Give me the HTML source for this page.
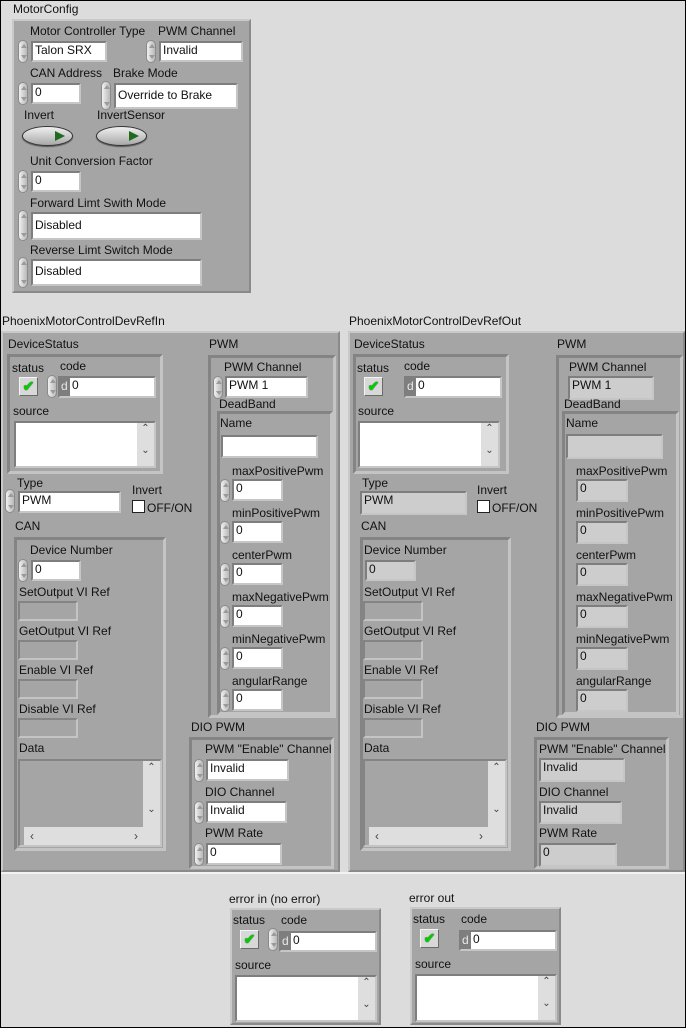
<!DOCTYPE html>
<html><head><meta charset="utf-8"><style>
*{margin:0;padding:0;box-sizing:border-box}
body{width:686px;height:1028px;background:#dcdcdc;position:relative;overflow:hidden;font:12px "Liberation Sans",sans-serif;color:#111}
#frame{position:absolute;left:0;top:0;width:686px;height:1028px;border:1px solid #000;pointer-events:none;z-index:9}
.a{position:absolute}
.L{position:absolute;white-space:nowrap;font-size:12px;line-height:14px}
.C{position:absolute;background:#a5a5a5;border:2px solid;border-color:#c9c9c9 #8a8a8a #8a8a8a #c9c9c9}
.R{position:absolute;background:#a5a5a5;border:3px solid;border-color:#848484 #c4c4c4 #c4c4c4 #848484}
.B{position:absolute;background:#fff;border:2px solid;border-color:#7e7e7e #c6c6c6 #c6c6c6 #7e7e7e;padding-left:2px;line-height:15px;font-size:12px;white-space:nowrap;overflow:hidden}
.I{position:absolute;background:#cdcdcd;border:2px solid;border-color:#7e7e7e #c6c6c6 #c6c6c6 #7e7e7e;padding-left:2px;line-height:15px;font-size:12px;white-space:nowrap;overflow:hidden}
.S{position:absolute;width:10px;border-radius:5px;background:linear-gradient(90deg,#f0f0f0,#b8b8b8);border:1px solid #8a8a8a}
.S:before{content:"";position:absolute;left:2px;top:3px;border-left:3px solid transparent;border-right:3px solid transparent;border-bottom:4px solid #9a9a9a}
.S:after{content:"";position:absolute;left:2px;bottom:3px;border-left:3px solid transparent;border-right:3px solid transparent;border-top:4px solid #9a9a9a}
.T{position:absolute;width:51px;height:20px;border-radius:50%;background:linear-gradient(#f0f0f0,#a8a8a8);border:1px solid #333;box-shadow:0 1px 1px #555}
.T:after{content:"";position:absolute;right:7px;top:4px;border-top:5px solid transparent;border-bottom:5px solid transparent;border-left:10px solid #1f6a1f}
.K{position:absolute;width:19px;height:19px;background:#d8d8d8;border:1px solid;border-color:#f4f4f4 #6a6a6a #6a6a6a #f4f4f4;color:#00d000;font-size:14px;line-height:16px;text-align:center;font-weight:bold;text-shadow:0 0 1px #000}
.D{position:absolute;width:10px;background:#7e7e7e;color:#e8e8e8;font-size:12px;line-height:16px;padding-left:1px}
.SB{position:absolute;background:#dedede;color:#444;font-size:10px;text-align:center}
.CB{position:absolute;width:13px;height:13px;background:#fff;border:1px solid #222}
</style></head><body>
<div id="frame"></div>
<div class="a" style="left:0;top:872px;width:686px;height:2px;background:#f2f2f2"></div>

<!-- MotorConfig -->
<div class="L" style="left:13px;top:2px">MotorConfig</div>
<div class="C" style="left:12px;top:19px;width:239px;height:274px"></div>
<div class="L" style="left:30px;top:24px">Motor Controller Type</div>
<div class="S" style="left:18px;top:40px;height:23px"></div>
<div class="B" style="left:31px;top:41px;width:76px;height:21px">Talon SRX</div>
<div class="L" style="left:158px;top:24px">PWM Channel</div>
<div class="S" style="left:146px;top:40px;height:23px"></div>
<div class="B" style="left:159px;top:41px;width:84px;height:21px">Invalid</div>
<div class="L" style="left:30px;top:66px">CAN Address</div>
<div class="S" style="left:18px;top:82px;height:23px"></div>
<div class="B" style="left:31px;top:83px;width:50px;height:21px">0</div>
<div class="L" style="left:113px;top:66px">Brake Mode</div>
<div class="S" style="left:101px;top:81px;height:29px"></div>
<div class="B" style="left:114px;top:83px;width:124px;height:26px;line-height:20px">Override to Brake</div>
<div class="L" style="left:24px;top:108px">Invert</div>
<div class="T" style="left:22px;top:126px"></div>
<div class="L" style="left:97px;top:108px">InvertSensor</div>
<div class="T" style="left:96px;top:126px"></div>
<div class="L" style="left:30px;top:154px">Unit Conversion Factor</div>
<div class="S" style="left:18px;top:170px;height:23px"></div>
<div class="B" style="left:31px;top:171px;width:50px;height:21px">0</div>
<div class="L" style="left:30px;top:196px">Forward Limt Swith Mode</div>
<div class="S" style="left:18px;top:210px;height:31px"></div>
<div class="B" style="left:31px;top:212px;width:171px;height:28px;line-height:22px">Disabled</div>
<div class="L" style="left:30px;top:243px">Reverse Limt Switch Mode</div>
<div class="S" style="left:18px;top:257px;height:31px"></div>
<div class="B" style="left:31px;top:259px;width:171px;height:27px;line-height:21px">Disabled</div>

<!-- Left big cluster -->
<div class="L" style="left:2px;top:314px">PhoenixMotorControlDevRefIn</div>
<div class="C" style="left:1px;top:331px;width:339px;height:541px"></div>
<div class="L" style="left:8px;top:337px">DeviceStatus</div>
<div class="R" style="left:7px;top:354px;width:156px;height:120px"></div>
<div class="L" style="left:12px;top:361px">status</div>
<div class="L" style="left:60px;top:359px">code</div>
<div class="K" style="left:19px;top:377px">✔</div>
<div class="S" style="left:47px;top:375px;height:23px"></div>
<div class="B" style="left:58px;top:376px;width:98px;height:22px;padding-left:12px">0</div>
<div class="D" style="left:60px;top:378px;height:18px">d</div>
<div class="L" style="left:13px;top:404px">source</div>
<div class="B" style="left:14px;top:421px;width:142px;height:47px"></div>
<div class="SB" style="left:137px;top:423px;width:17px;height:43px">⌃<br><br>⌄</div>
<div class="L" style="left:17px;top:476px">Type</div>
<div class="S" style="left:5px;top:489px;height:24px"></div>
<div class="B" style="left:18px;top:491px;width:103px;height:22px">PWM</div>
<div class="L" style="left:132px;top:483px">Invert</div>
<div class="CB" style="left:132px;top:500px"></div>
<div class="L" style="left:147px;top:501px">OFF/ON</div>
<div class="L" style="left:15px;top:519px">CAN</div>
<div class="R" style="left:14px;top:537px;width:152px;height:314px"></div>
<div class="L" style="left:30px;top:543px">Device Number</div>
<div class="S" style="left:18px;top:559px;height:23px"></div>
<div class="B" style="left:31px;top:560px;width:50px;height:21px">0</div>
<div class="L" style="left:19px;top:585px">SetOutput VI Ref</div>
<div class="R" style="left:18px;top:601px;width:60px;height:20px;border-width:2px"></div>
<div class="L" style="left:19px;top:624px">GetOutput VI Ref</div>
<div class="R" style="left:18px;top:640px;width:60px;height:20px;border-width:2px"></div>
<div class="L" style="left:19px;top:663px">Enable VI Ref</div>
<div class="R" style="left:18px;top:679px;width:60px;height:20px;border-width:2px"></div>
<div class="L" style="left:19px;top:702px">Disable VI Ref</div>
<div class="R" style="left:18px;top:718px;width:60px;height:20px;border-width:2px"></div>
<div class="L" style="left:19px;top:741px">Data</div>
<div class="R" style="left:18px;top:759px;width:144px;height:88px;border-width:2px"></div>
<div class="SB" style="left:143px;top:761px;width:17px;height:66px;line-height:14px">⌃<br><br><br>⌄</div>
<div class="SB" style="left:24px;top:827px;width:136px;height:18px;line-height:18px;font-size:12px;text-align:left;padding-left:6px">‹<span style="margin-left:100px">›</span></div>

<div class="L" style="left:209px;top:337px">PWM</div>
<div class="R" style="left:208px;top:355px;width:128px;height:363px"></div>
<div class="L" style="left:224px;top:360px">PWM Channel</div>
<div class="S" style="left:213px;top:376px;height:23px"></div>
<div class="B" style="left:225px;top:376px;width:83px;height:22px">PWM 1</div>
<div class="L" style="left:219px;top:397px">DeadBand</div>
<div class="R" style="left:217px;top:411px;width:116px;height:304px"></div>
<div class="L" style="left:220px;top:416px">Name</div>
<div class="B" style="left:221px;top:435px;width:97px;height:23px"></div>
<div class="L" style="left:232px;top:464px">maxPositivePwm</div>
<div class="S" style="left:220px;top:479px;height:23px"></div>
<div class="B" style="left:232px;top:479px;width:51px;height:22px">0</div>
<div class="L" style="left:232px;top:506px">minPositivePwm</div>
<div class="S" style="left:220px;top:521px;height:23px"></div>
<div class="B" style="left:232px;top:521px;width:51px;height:22px">0</div>
<div class="L" style="left:232px;top:548px">centerPwm</div>
<div class="S" style="left:220px;top:563px;height:23px"></div>
<div class="B" style="left:232px;top:563px;width:51px;height:22px">0</div>
<div class="L" style="left:232px;top:590px">maxNegativePwm</div>
<div class="S" style="left:220px;top:605px;height:23px"></div>
<div class="B" style="left:232px;top:605px;width:51px;height:22px">0</div>
<div class="L" style="left:232px;top:632px">minNegativePwm</div>
<div class="S" style="left:220px;top:647px;height:23px"></div>
<div class="B" style="left:232px;top:647px;width:51px;height:22px">0</div>
<div class="L" style="left:232px;top:674px">angularRange</div>
<div class="S" style="left:220px;top:689px;height:23px"></div>
<div class="B" style="left:232px;top:689px;width:51px;height:22px">0</div>

<div class="L" style="left:191px;top:720px">DIO PWM</div>
<div class="R" style="left:189px;top:737px;width:145px;height:132px"></div>
<div class="L" style="left:205px;top:742px">PWM "Enable" Channel</div>
<div class="S" style="left:194px;top:759px;height:23px"></div>
<div class="B" style="left:206px;top:759px;width:83px;height:22px">Invalid</div>
<div class="L" style="left:205px;top:785px">DIO Channel</div>
<div class="S" style="left:194px;top:801px;height:23px"></div>
<div class="B" style="left:206px;top:801px;width:81px;height:22px">Invalid</div>
<div class="L" style="left:205px;top:826px">PWM Rate</div>
<div class="S" style="left:194px;top:843px;height:23px"></div>
<div class="B" style="left:206px;top:843px;width:76px;height:22px">0</div>

<!-- Right big cluster -->
<div class="L" style="left:349px;top:314px">PhoenixMotorControlDevRefOut</div>
<div class="C" style="left:348px;top:331px;width:337px;height:541px"></div>
<div class="L" style="left:354px;top:337px">DeviceStatus</div>
<div class="R" style="left:353px;top:354px;width:156px;height:120px"></div>
<div class="L" style="left:357px;top:361px">status</div>
<div class="L" style="left:404px;top:359px">code</div>
<div class="K" style="left:364px;top:377px">✔</div>
<div class="B" style="left:404px;top:376px;width:98px;height:22px;padding-left:12px">0</div>
<div class="D" style="left:406px;top:378px;height:18px">d</div>
<div class="L" style="left:358px;top:404px">source</div>
<div class="B" style="left:358px;top:421px;width:142px;height:47px"></div>
<div class="SB" style="left:481px;top:423px;width:17px;height:43px">⌃<br><br>⌄</div>
<div class="L" style="left:362px;top:476px">Type</div>
<div class="I" style="left:360px;top:491px;width:107px;height:24px">PWM</div>
<div class="L" style="left:477px;top:483px">Invert</div>
<div class="CB" style="left:477px;top:500px"></div>
<div class="L" style="left:492px;top:501px">OFF/ON</div>
<div class="L" style="left:361px;top:519px">CAN</div>
<div class="R" style="left:360px;top:537px;width:151px;height:314px"></div>
<div class="L" style="left:364px;top:543px">Device Number</div>
<div class="I" style="left:365px;top:560px;width:51px;height:21px">0</div>
<div class="L" style="left:364px;top:585px">SetOutput VI Ref</div>
<div class="R" style="left:363px;top:601px;width:60px;height:20px;border-width:2px"></div>
<div class="L" style="left:364px;top:624px">GetOutput VI Ref</div>
<div class="R" style="left:363px;top:640px;width:60px;height:20px;border-width:2px"></div>
<div class="L" style="left:364px;top:663px">Enable VI Ref</div>
<div class="R" style="left:363px;top:679px;width:60px;height:20px;border-width:2px"></div>
<div class="L" style="left:364px;top:702px">Disable VI Ref</div>
<div class="R" style="left:363px;top:718px;width:60px;height:20px;border-width:2px"></div>
<div class="L" style="left:364px;top:741px">Data</div>
<div class="R" style="left:363px;top:759px;width:144px;height:88px;border-width:2px"></div>
<div class="SB" style="left:488px;top:761px;width:17px;height:66px;line-height:14px">⌃<br><br><br>⌄</div>
<div class="SB" style="left:369px;top:827px;width:136px;height:18px;line-height:18px;font-size:12px;text-align:left;padding-left:6px">‹<span style="margin-left:100px">›</span></div>

<div class="L" style="left:557px;top:337px">PWM</div>
<div class="R" style="left:556px;top:355px;width:127px;height:363px"></div>
<div class="L" style="left:569px;top:360px">PWM Channel</div>
<div class="I" style="left:568px;top:376px;width:86px;height:24px">PWM 1</div>
<div class="L" style="left:564px;top:397px">DeadBand</div>
<div class="R" style="left:562px;top:411px;width:117px;height:304px"></div>
<div class="L" style="left:566px;top:416px">Name</div>
<div class="I" style="left:566px;top:434px;width:97px;height:25px"></div>
<div class="L" style="left:576px;top:464px">maxPositivePwm</div>
<div class="I" style="left:576px;top:479px;width:52px;height:23px">0</div>
<div class="L" style="left:576px;top:506px">minPositivePwm</div>
<div class="I" style="left:576px;top:521px;width:52px;height:23px">0</div>
<div class="L" style="left:576px;top:548px">centerPwm</div>
<div class="I" style="left:576px;top:563px;width:52px;height:23px">0</div>
<div class="L" style="left:576px;top:590px">maxNegativePwm</div>
<div class="I" style="left:576px;top:605px;width:52px;height:23px">0</div>
<div class="L" style="left:576px;top:632px">minNegativePwm</div>
<div class="I" style="left:576px;top:647px;width:52px;height:23px">0</div>
<div class="L" style="left:576px;top:674px">angularRange</div>
<div class="I" style="left:576px;top:689px;width:52px;height:23px">0</div>

<div class="L" style="left:536px;top:720px">DIO PWM</div>
<div class="R" style="left:534px;top:737px;width:135px;height:132px"></div>
<div class="L" style="left:539px;top:742px">PWM "Enable" Channel</div>
<div class="I" style="left:539px;top:758px;width:86px;height:24px">Invalid</div>
<div class="L" style="left:539px;top:785px">DIO Channel</div>
<div class="I" style="left:539px;top:801px;width:83px;height:23px">Invalid</div>
<div class="L" style="left:539px;top:826px">PWM Rate</div>
<div class="I" style="left:539px;top:843px;width:78px;height:24px">0</div>

<!-- error in -->
<div class="L" style="left:229px;top:892px">error in (no error)</div>
<div class="C" style="left:230px;top:908px;width:151px;height:117px"></div>
<div class="L" style="left:233px;top:913px">status</div>
<div class="L" style="left:281px;top:913px">code</div>
<div class="K" style="left:240px;top:930px">✔</div>
<div class="S" style="left:268px;top:928px;height:23px"></div>
<div class="B" style="left:279px;top:931px;width:98px;height:21px;padding-left:12px">0</div>
<div class="D" style="left:281px;top:933px;height:17px">d</div>
<div class="L" style="left:235px;top:958px">source</div>
<div class="B" style="left:235px;top:975px;width:142px;height:47px"></div>
<div class="SB" style="left:358px;top:977px;width:17px;height:43px">⌃<br><br>⌄</div>

<!-- error out -->
<div class="L" style="left:409px;top:891px">error out</div>
<div class="C" style="left:410px;top:907px;width:151px;height:118px"></div>
<div class="L" style="left:413px;top:912px">status</div>
<div class="L" style="left:461px;top:912px">code</div>
<div class="K" style="left:420px;top:929px">✔</div>
<div class="B" style="left:459px;top:930px;width:98px;height:21px;padding-left:12px">0</div>
<div class="D" style="left:461px;top:932px;height:17px">d</div>
<div class="L" style="left:415px;top:957px">source</div>
<div class="B" style="left:415px;top:974px;width:142px;height:48px"></div>
<div class="SB" style="left:538px;top:976px;width:17px;height:44px">⌃<br><br>⌄</div>
</body></html>
